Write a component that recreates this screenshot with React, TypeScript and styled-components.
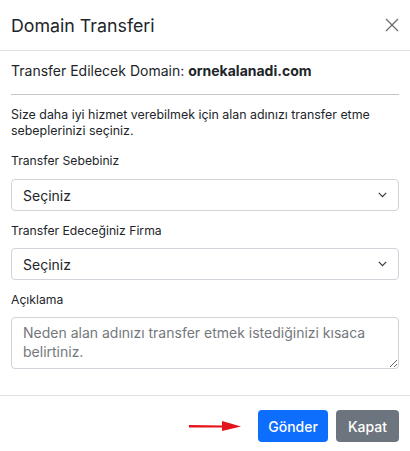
import styled, { createGlobalStyle } from 'styled-components';

const GlobalStyle = createGlobalStyle`
	html, body {
		margin: 0;
		padding: 0;
		background: #ffffff;
	}
	body {
		font-family: Inter, 'Noto Sans', sans-serif;
		color: #212529;
	}
	* {
		box-sizing: border-box;
	}
`;

const Modal = styled.div`
	width: 410px;
	height: 451px;
	background: #ffffff;
	display: flex;
	flex-direction: column;
`;

const Header = styled.div`
	height: 51px;
	padding: 0 11px;
	display: flex;
	align-items: center;
	justify-content: space-between;
	border-bottom: 1px solid #dee2e6;
`;

const Title = styled.h5`
	margin: 0;
	font-size: 17.8px;
	font-weight: 400;
	color: #212529;
`;

const CloseButton = styled.button`
	border: 0;
	background: transparent;
	padding: 0;
	width: 14px;
	height: 14px;
	display: flex;
	cursor: pointer;
`;

const Body = styled.div`
	padding: 11px 11px 0;
	flex: 1;
`;

const DomainLine = styled.p`
	margin: 0;
	font-size: 14px;
	line-height: 17px;
	color: #212529;

	strong {
		font-weight: 700;
	}
`;

const Divider = styled.hr`
	margin: 15px 0 12px;
	border: 0;
	border-top: 1px solid #c4c6c8;
`;

const Intro = styled.p`
	margin: 0 0 13px;
	font-size: 12.4px;
	line-height: 16px;
	color: #212529;
`;

const Group = styled.div`
	margin-bottom: 11px;
`;

const Label = styled.label<{ $gap?: number }>`
	display: block;
	font-size: 12.2px;
	line-height: 18px;
	margin-bottom: ${(p) => p.$gap ?? 8}px;
	color: #212529;
`;

const SelectWrap = styled.div`
	position: relative;
`;

const Select = styled.select`
	width: 100%;
	height: 32px;
	appearance: none;
	border: 1px solid #ced4da;
	border-radius: 4px;
	background: #ffffff;
	padding: 0 30px 0 11px;
	font-family: inherit;
	font-size: 14px;
	color: #212529;
	outline: none;
`;

const Chevron = styled.svg`
	position: absolute;
	right: 12px;
	top: 13px;
	pointer-events: none;
`;

const TextArea = styled.textarea`
	width: 100%;
	height: 52px;
	display: block;
	border: 1px solid #ced4da;
	border-radius: 4px;
	padding: 5px 11px;
	font-family: inherit;
	font-size: 14px;
	line-height: 19px;
	color: #212529;
	outline: none;

	&::placeholder {
		color: #74787c;
	}
`;

const Footer = styled.div`
	border-top: 1px solid #dee2e6;
	padding: 14px 11px 9px;
	display: flex;
	align-items: center;
	justify-content: flex-end;
	gap: 8px;
`;

const Arrow = styled.svg`
	margin-right: 8px;
`;

const Button = styled.button<{ $variant: 'primary' | 'secondary' }>`
	height: 32px;
	padding: 0 ${(p) => (p.$variant === 'primary' ? 10 : 12)}px;
	border: 0;
	border-radius: 4px;
	font-family: inherit;
	font-size: 14px;
	font-weight: 500;
	color: #ffffff;
	background: ${(p) => (p.$variant === 'primary' ? '#0d6efd' : '#6c757d')};
	cursor: pointer;
`;

function SelectField(props: { label: string; gap?: number }) {
	return (
		<Group>
			<Label $gap={props.gap}>{props.label}</Label>
			<SelectWrap>
				<Select defaultValue="">
					<option value="">Seçiniz</option>
				</Select>
				<Chevron width="9" height="6" viewBox="0 0 9 6">
					<path d="M0.8 0.8 L4.5 4.6 L8.2 0.8" fill="none" stroke="#343a40" strokeWidth="1.2" />
				</Chevron>
			</SelectWrap>
		</Group>
	);
}

export default function App() {
	return (
		<>
			<GlobalStyle />
			<Modal>
				<Header>
					<Title>Domain Transferi</Title>
					<CloseButton aria-label="Kapat">
						<svg width="14" height="14" viewBox="0 0 14 14">
							<path d="M1 1 L13 13 M13 1 L1 13" stroke="#6a6d70" strokeWidth="1.3" />
						</svg>
					</CloseButton>
				</Header>
				<Body>
					<DomainLine>
						Transfer Edilecek Domain: <strong>ornekalanadi.com</strong>
					</DomainLine>
					<Divider />
					<Intro>Size daha iyi hizmet verebilmek için alan adınızı transfer etme sebeplerinizi seçiniz.</Intro>
					<SelectField label="Transfer Sebebiniz" gap={9} />
					<SelectField label="Transfer Edeceğiniz Firma" />
					<Group>
						<Label>Açıklama</Label>
						<TextArea placeholder="Neden alan adınızı transfer etmek istediğinizi kısaca belirtiniz." />
					</Group>
				</Body>
				<Footer>
					<Arrow width="53" height="12" viewBox="0 0 53 12">
						<path d="M0 5 L34 5.5 L34 7.5 L0 7.5 Z" fill="#e3141b" />
						<path d="M33 1 L52 6.5 L33 11 Z" fill="#e3141b" />
					</Arrow>
					<Button $variant="primary">Gönder</Button>
					<Button $variant="secondary">Kapat</Button>
				</Footer>
			</Modal>
		</>
	);
}
